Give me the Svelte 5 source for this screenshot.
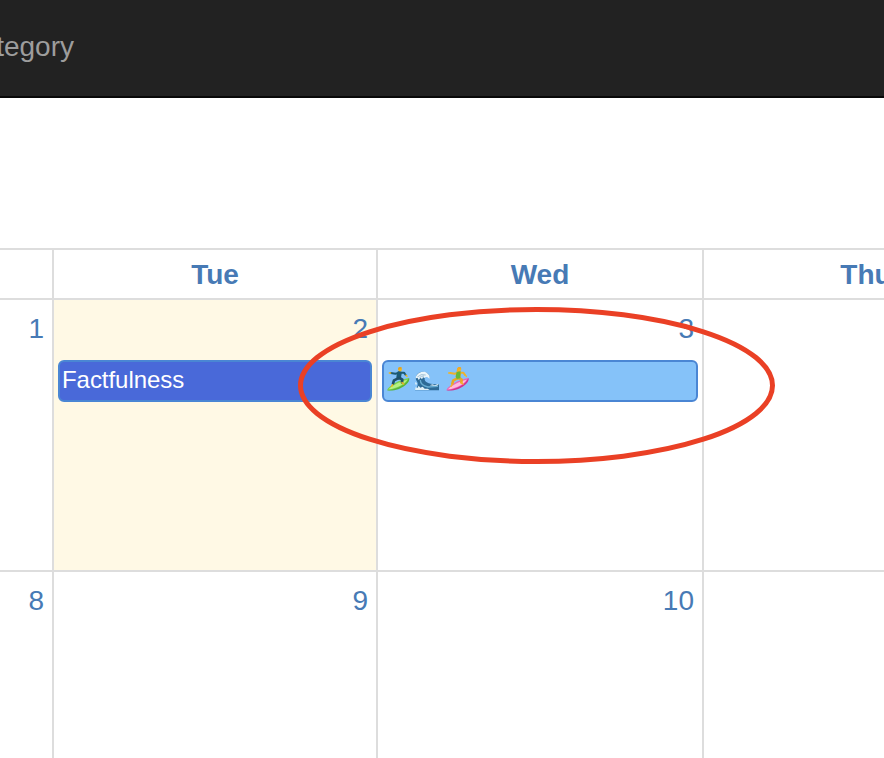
<script>
  const days = [
    { name: 'Mon', first: 1, second: 8 },
    { name: 'Tue', first: 2, second: 9, today: true, event: 'book' },
    { name: 'Wed', first: 3, second: 10, event: 'surf' },
    { name: 'Thu', first: 4, second: 11 }
  ];
</script>

{#snippet surfer(suit, leg, skin, board, light, edge, hair)}
  <path d="M0 70C4 57 38 37 66 33C71 44 42 70 0 70Z" fill={board} />
  <path d="M5 67C13 56 40 43 61 38C55 50 30 64 5 67Z" fill={light} />
  <path d="M0 70C33 67 60 50 66 33C72 46 40 75 0 70Z" fill={edge} />
  <g fill="none" stroke-linecap="round" stroke-linejoin="round">
    <path d="M37 17L25 20L12 18M41 17L51 17L56 24" stroke={suit} stroke-width="6" />
    <path d="M11 18L7 18M57 25L60 28" stroke={skin} stroke-width="4.5" />
    <path d="M37 19L35 31" stroke={suit} stroke-width="14" />
    <path d="M33 34L21 40L18 50M38 33L46 38L45 46" stroke={leg} stroke-width="8" />
    <path d="M17 53L14 58M45 47L50 51" stroke={skin} stroke-width="4.5" />
  </g>
  <ellipse cx="39" cy="7" rx="5.5" ry="6.5" fill={skin} />
  <path d="M33 7Q33 0 39 0Q46 1 45 4Q39 4 35 9Z" fill={hair} />
{/snippet}

<div class="page">
  <nav><span>Category</span></nav>
  <main>
    <div class="row heads">
      {#each days as d, i}
        <div class="cell">{#if i > 0}{d.name}{/if}</div>
      {/each}
    </div>
    <div class="row week">
      {#each days as d, i}
        <div class="cell" class:today={d.today}>
          {#if i < 3}<div class="num">{d.first}</div>{/if}
          {#if d.event === 'book'}
            <div class="event book">Factfulness</div>
          {:else if d.event === 'surf'}
            <div class="event surf">
              <svg width="84" height="26" viewBox="0 0 252 78" role="img" aria-label="Surfing">
                <g transform="translate(0 3)">
                  {@render surfer('#1b5a73', '#205068', '#f2b51d', '#7ad04f', '#b5f083', '#58b43a', '#e5a01a')}
                </g>
                <g transform="translate(84 15)">
                  <path d="M0 58C8 48 11 38 5 30C-2 18 7 3 22 2C35 1 46 11 44 21C37 13 31 15 29 22C27 35 44 41 72 39V58Z" fill="#2d6a96" />
                  <path d="M2 22C4 5 25-3 37 7C43 11 46 18 43 23C38 17 32 16 29 21L24 19L21 25L17 20L11 27L8 21Z" fill="#eaf5fb" />
                  <path d="M7 18Q18 7 32 12M13 21Q19 14 27 15" fill="none" stroke="#7ba4c2" stroke-width="2" />
                  <path d="M16 27Q16 43 39 48L69 46" fill="none" stroke="#68add2" stroke-width="4" />
                  <path d="M0 57L2 48L7 51L11 44L16 50L23 47L29 53L38 53L44 57Z" fill="#e1f0f7" />
                  <path d="M1 33L6 37L4 42L0 39ZM44 43L52 40L60 43L67 39L72 41L63 45L53 44Z" fill="#d6ebf6" />
                </g>
                <g transform="translate(178 3)">
                  {@render surfer('#eeb12c', '#e8a727', '#f1b52a', '#e868b8', '#ffb9df', '#cf318e', '#ee9e20')}
                  <path d="M31 14L43 13L42 26L42 34L31 36L28 28Z" fill="#66b83a" />
                  <path d="M32 5Q36 0 41 1L45 5L39 4L35 13L31 16Z" fill="#f5ad21" />
                </g>
              </svg>
            </div>
          {/if}
        </div>
      {/each}
    </div>
    <div class="row week">
      {#each days as d, i}
        <div class="cell">{#if i < 3}<div class="num">{d.second}</div>{/if}</div>
      {/each}
    </div>
  </main>
  <svg class="ring" width="884" height="758" viewBox="0 0 884 758" aria-hidden="true">
    <ellipse cx="536.5" cy="385.5" rx="236" ry="76" />
  </svg>
</div>

<style>
  .page {
    position: relative;
    width: 884px;
    height: 758px;
    overflow: hidden;
    background: #fff;
    font-family: "Liberation Sans", Arial, sans-serif;
    font-size: 28px;
    color: #477ab5;
  }
  nav {
    box-sizing: border-box;
    height: 98px;
    padding-right: 810px;
    display: flex;
    align-items: center;
    justify-content: flex-end;
    background: #222;
    border-bottom: 2px solid #080808;
    color: #9d9d9d;
    line-height: 40px;
  }
  nav span { margin-top: -2px; }
  main { margin-top: 150px; }
  .row {
    display: grid;
    grid-template-columns: 54px 324px 326px 326px;
    width: 1030px;
    box-sizing: border-box;
    border-top: 2px solid #ddd;
  }
  .heads { height: 50px; font-weight: bold; text-align: center; line-height: 50px; }
  .week { height: 272px; }
  .cell {
    box-sizing: border-box;
    border-right: 2px solid #ddd;
    min-width: 0;
    height: 100%;
  }
  .today { background: #fff9e5; }
  .num {
    height: 40px;
    margin-top: 8px;
    padding-right: 8px;
    text-align: right;
    line-height: 41px;
  }
  .event {
    box-sizing: border-box;
    height: 42px;
    margin: 12px 4px 0;
    border: 2px solid #4a86d4;
    border-radius: 6px;
    color: #fff;
    font-size: 24px;
    line-height: 36px;
  }
  .book { background: #4969d9; padding-left: 2px; letter-spacing: -0.05px; }
  .surf { background: #85c2f9; padding: 4px 3px; }
  .surf svg { display: block; }
  .ring { position: absolute; top: 0; left: 0; pointer-events: none; }
  .ring ellipse { fill: none; stroke: #ea4025; stroke-width: 5; }
</style>
